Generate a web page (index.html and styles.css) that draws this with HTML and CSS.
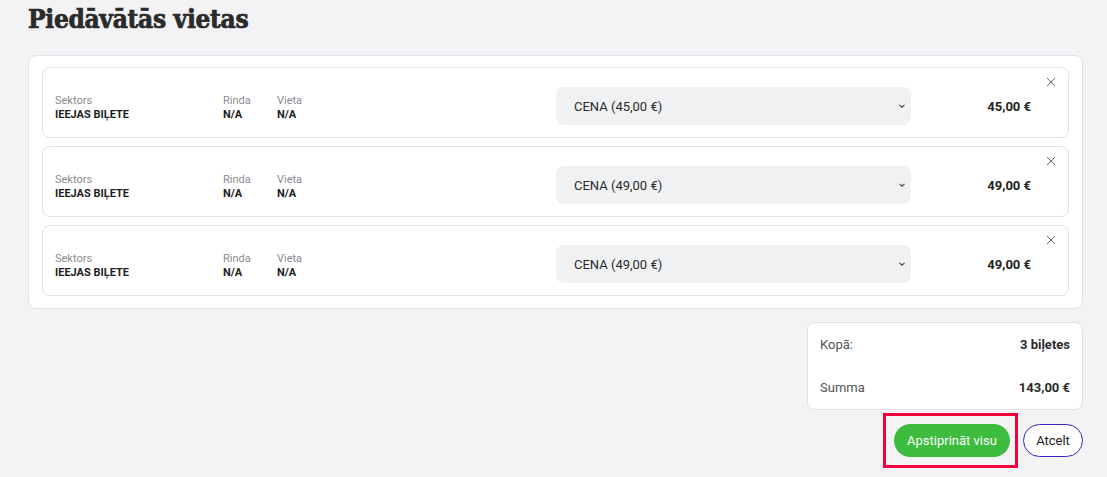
FILE: index.html
```html
<!DOCTYPE html>
<html lang="lv">
<head>
<meta charset="utf-8">
<link rel="stylesheet" href="styles.css">
</head>
<body>
<main class="page">
  <h1 class="title">Piedāvātās vietas</h1>
  <section class="list">
    <div class="item">
      <div class="col col-sector"><span class="lbl">Sektors</span><span class="val">IEEJAS BIĻETE</span></div>
      <div class="col col-row"><span class="lbl">Rinda</span><span class="val">N/A</span></div>
      <div class="col col-seat"><span class="lbl">Vieta</span><span class="val">N/A</span></div>
      <div class="select"><span>CENA (45,00 €)</span><svg class="chev" width="8" height="6" viewBox="0 0 8 6"><path d="M1.5 1.8 L4 4.2 L6.5 1.8" fill="none" stroke="#444" stroke-width="1.1"/></svg></div>
      <div class="price">45,00 €</div>
      <button class="close" aria-label="close"><svg width="10" height="10" viewBox="0 0 10 10"><path d="M1 1 L9 9 M9 1 L1 9" stroke="#666" stroke-width="1"/></svg></button>
    </div>
    <div class="item">
      <div class="col col-sector"><span class="lbl">Sektors</span><span class="val">IEEJAS BIĻETE</span></div>
      <div class="col col-row"><span class="lbl">Rinda</span><span class="val">N/A</span></div>
      <div class="col col-seat"><span class="lbl">Vieta</span><span class="val">N/A</span></div>
      <div class="select"><span>CENA (49,00 €)</span><svg class="chev" width="8" height="6" viewBox="0 0 8 6"><path d="M1.5 1.8 L4 4.2 L6.5 1.8" fill="none" stroke="#444" stroke-width="1.1"/></svg></div>
      <div class="price">49,00 €</div>
      <button class="close" aria-label="close"><svg width="10" height="10" viewBox="0 0 10 10"><path d="M1 1 L9 9 M9 1 L1 9" stroke="#666" stroke-width="1"/></svg></button>
    </div>
    <div class="item">
      <div class="col col-sector"><span class="lbl">Sektors</span><span class="val">IEEJAS BIĻETE</span></div>
      <div class="col col-row"><span class="lbl">Rinda</span><span class="val">N/A</span></div>
      <div class="col col-seat"><span class="lbl">Vieta</span><span class="val">N/A</span></div>
      <div class="select"><span>CENA (49,00 €)</span><svg class="chev" width="8" height="6" viewBox="0 0 8 6"><path d="M1.5 1.8 L4 4.2 L6.5 1.8" fill="none" stroke="#444" stroke-width="1.1"/></svg></div>
      <div class="price">49,00 €</div>
      <button class="close" aria-label="close"><svg width="10" height="10" viewBox="0 0 10 10"><path d="M1 1 L9 9 M9 1 L1 9" stroke="#666" stroke-width="1"/></svg></button>
    </div>
  </section>
  <section class="summary">
    <div class="sum-row"><span class="sum-lbl">Kopā:</span><span class="sum-val">3 biļetes</span></div>
    <div class="sum-row"><span class="sum-lbl">Summa</span><span class="sum-val">143,00 €</span></div>
  </section>
  <div class="actions">
    <div class="highlight"><button class="btn-confirm">Apstiprināt visu</button></div>
    <button class="btn-cancel">Atcelt</button>
  </div>
</main>
</body>
</html>
```
FILE: styles.css
```css
* { box-sizing: border-box; }
html, body { margin: 0; padding: 0; }
body {
  background: #f3f3f6;
  font-family: Roboto, "Liberation Sans", Arial, sans-serif;
  color: #222;
}
.page {
  padding: 0 24px 10px 28px;
}
.title {
  margin: 0;
  padding-top: 4px;
  height: 55px;
  font-family: "DejaVu Serif Condensed", "DejaVu Serif", serif;
  font-weight: 900;
  font-size: 26px;
  line-height: 30px;
  color: #2b2b2b;
  letter-spacing: -0.3px;
  -webkit-text-stroke: 0.7px #2b2b2b;
}
.list {
  background: #fff;
  border: 1px solid #e1e1e7;
  border-radius: 8px;
  padding: 11px 13px 12px 13px;
  display: flex;
  flex-direction: column;
  gap: 8px;
}
.item {
  position: relative;
  display: flex;
  align-items: center;
  height: 71px;
  border: 1px solid #e1e1e7;
  border-radius: 8px;
  padding: 19px 0 12px 12px;
}
.col {
  display: flex;
  flex-direction: column;
  font-size: 11px;
  line-height: 14px;
  padding-top: 3px;
}
.col-sector { width: 168px; }
.col-row { width: 54px; }
.col-seat { width: 279px; }
.lbl { color: #8a8a8f; }
.val { color: #1d1d1f; font-weight: 700; }
.select {
  width: 355px;
  height: 38px;
  background: #f0f1f3;
  border-radius: 8px;
  display: flex;
  align-items: center;
  justify-content: space-between;
  padding: 0 5px 0 18px;
  font-size: 13px;
  color: #2a2a2a;
}
.price {
  width: 120px;
  text-align: right;
  font-size: 13px;
  font-weight: 700;
  color: #222;
}
.close {
  position: absolute;
  top: 9px;
  right: 12px;
  width: 10px;
  height: 10px;
  padding: 0;
  border: 0;
  background: none;
  display: flex;
}
.summary {
  margin: 13px 0 0 auto;
  width: 276px;
  height: 88px;
  background: #fff;
  border: 1px solid #e1e1e7;
  border-radius: 8px;
  padding: 13px 12px 13px 12px;
  display: flex;
  flex-direction: column;
  justify-content: space-between;
}
.sum-row {
  display: flex;
  justify-content: space-between;
  font-size: 13px;
  line-height: 17px;
}
.sum-lbl { color: #555; }
.sum-val { font-weight: 700; color: #2a2a2a; }
.actions {
  display: flex;
  justify-content: flex-end;
  align-items: center;
  gap: 5px;
  margin-top: 3px;
}
.highlight {
  border: 3px solid #f5003d;
  padding: 8px 5px 8px 8px;
}
.btn-confirm {
  display: block;
  height: 33px;
  width: 116px;
  border: 0;
  border-radius: 17px;
  background: #3dbc3d;
  color: #fff;
  font-family: Roboto, "Liberation Sans", Arial, sans-serif;
  font-size: 13px;
  font-weight: 400;
  padding: 0;
}
.btn-cancel {
  height: 33px;
  width: 60px;
  border: 1px solid #3a22c0;
  border-radius: 17px;
  background: #fff;
  color: #222;
  font-family: Roboto, "Liberation Sans", Arial, sans-serif;
  font-size: 13px;
  padding: 0;
}
```
